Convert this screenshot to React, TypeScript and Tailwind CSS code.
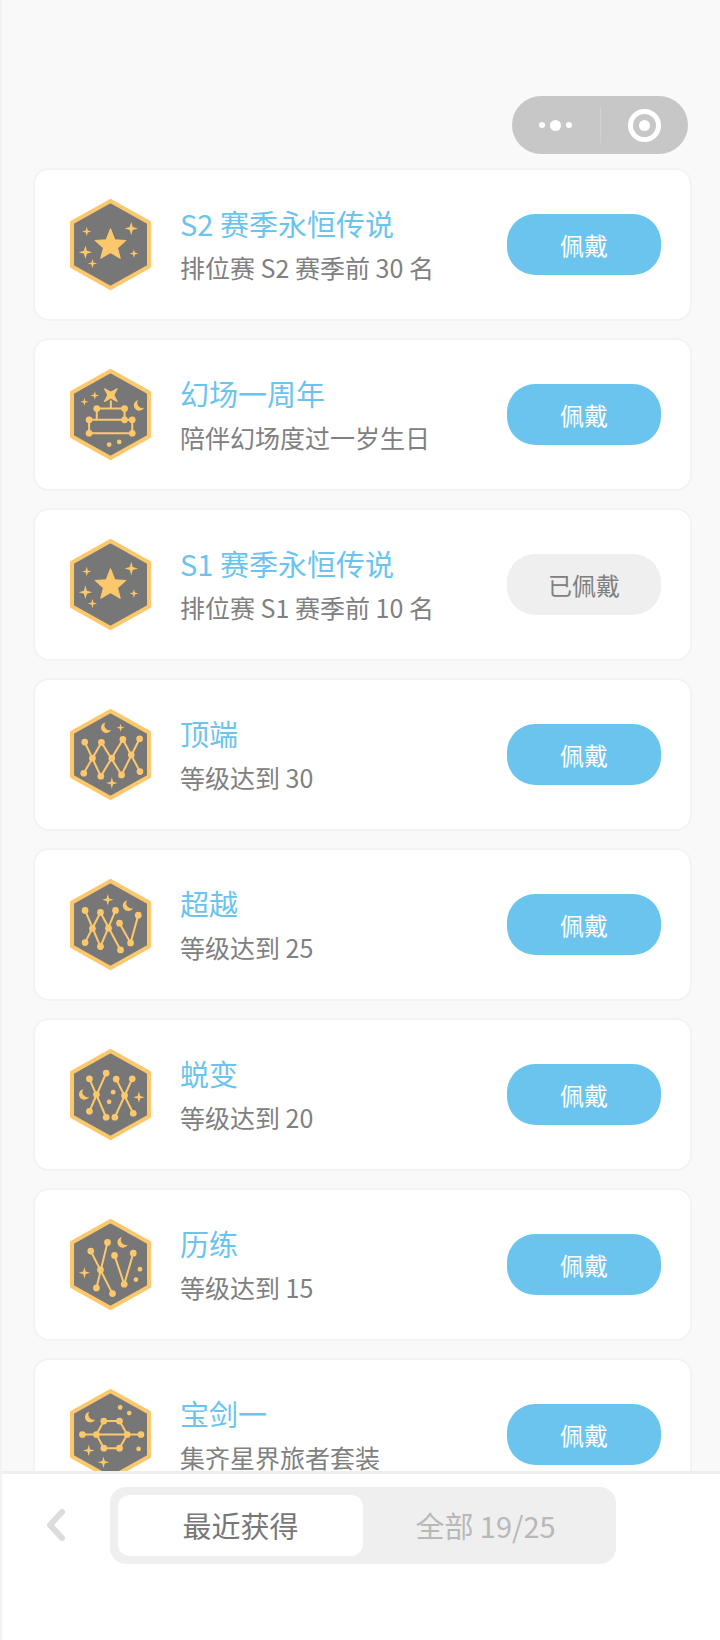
import React, { useState } from 'react';

type Point = [number, number];

interface BadgeArt {
  lines?: string;
  nodes?: Point[];
  dots?: Point[];
  // x, y, radius
  sparks?: [number, number, number][];
  moon?: Point;
  extra?: React.ReactNode;
}

interface Badge {
  id: number;
  title: string;
  description: string;
  art: BadgeArt;
}

const GOLD = '#fdc86c';

const starArt: BadgeArt = {
  sparks: [
    [50, 97, 14],
    [183, 88, 20],
    [46, 159, 20],
    [67, 193, 14],
    [191, 163, 13],
  ],
  extra: (
    <path
      d="M121 89 L134 122 L167 124 L142 146 L150 177 L121 160 L92 177 L100 146 L75 124 L108 122 Z"
      fill={GOLD}
      stroke={GOLD}
      strokeWidth="3"
      strokeLinejoin="round"
    />
  ),
};

const cakeArt: BadgeArt = {
  lines: 'M122 94 V118 M80 152 V118 H163 V152 M57 152 H186 V192 H57 Z',
  nodes: [[80, 118], [163, 118], [57, 152], [163, 152], [186, 152], [57, 192], [186, 192]],
  dots: [[117, 226], [147, 218]],
  sparks: [
    [43, 98, 12],
    [74, 79, 13],
  ],
  moon: [206, 109],
  extra: (
    <path
      d="M103 59 L122 69 L141 59 L131 78 L141 97 L122 87 L103 97 L113 78 Z"
      fill={GOLD}
      stroke={GOLD}
      strokeWidth="3"
      strokeLinejoin="round"
    />
  ),
};

const level30Art: BadgeArt = {
  lines: 'M44 99 L92 201 L158 91 L209 187 M41 192 L94 100 L154 197 L208 89',
  nodes: [
    [44, 99], [94, 100], [158, 91], [208, 89],
    [67, 147], [125, 147], [183, 137],
    [41, 192], [92, 201], [154, 197], [209, 187],
  ],
  sparks: [
    [151, 56, 12],
    [125, 221, 17],
  ],
  moon: [108, 56],
};

const level25Art: BadgeArt = {
  lines: 'M45 94 L91 202 L136 94 M45 190 L91 100 L151 212 M148 132 L181 191 L204 108',
  nodes: [
    [45, 94], [91, 100], [136, 94],
    [67, 148], [115, 147],
    [45, 190], [91, 202], [151, 212],
    [148, 132], [181, 191], [204, 108],
  ],
  sparks: [[113, 62, 17]],
  moon: [173, 80],
};

const level20Art: BadgeArt = {
  lines: 'M58 89 L108 204 M108 72 L58 186 M138 90 L189 192 M186 89 L134 204',
  nodes: [
    [58, 89], [108, 72], [79, 136], [58, 186], [108, 204],
    [138, 90], [186, 89], [163, 139], [134, 204], [189, 192],
  ],
  dots: [[129, 129], [117, 158]],
  sparks: [[206, 144, 17]],
  moon: [42, 136],
};

const level15Art: BadgeArt = {
  lines: 'M62 96 L127 223 M112 70 L79 206 M133 109 L162 195 L189 102',
  nodes: [
    [62, 96], [112, 70], [91, 152], [79, 206], [127, 223],
    [133, 109], [189, 102], [162, 195],
  ],
  dots: [[209, 150], [197, 181]],
  sparks: [[43, 161, 17]],
  moon: [157, 70],
};

const swordArt: BadgeArt = {
  lines: 'M37 136 H212 M79 136 L101 96 H148 L171 136 L148 177 H101 Z',
  nodes: [
    [37, 136], [79, 136], [171, 136], [212, 136],
    [101, 96], [148, 96], [101, 177], [148, 177],
  ],
  dots: [[150, 55], [177, 72], [205, 179]],
  sparks: [
    [56, 184, 17],
    [100, 219, 17],
  ],
  moon: [60, 84],
};

const badges: Badge[] = [
  { id: 1, title: 'S2 赛季永恒传说', description: '排位赛 S2 赛季前 30 名', art: starArt },
  { id: 2, title: '幻场一周年', description: '陪伴幻场度过一岁生日', art: cakeArt },
  { id: 3, title: 'S1 赛季永恒传说', description: '排位赛 S1 赛季前 10 名', art: starArt },
  { id: 4, title: '顶端', description: '等级达到 30', art: level30Art },
  { id: 5, title: '超越', description: '等级达到 25', art: level25Art },
  { id: 6, title: '蜕变', description: '等级达到 20', art: level20Art },
  { id: 7, title: '历练', description: '等级达到 15', art: level15Art },
  { id: 8, title: '宝剑一', description: '集齐星界旅者套装', art: swordArt },
];

const sparkPath = (x: number, y: number, r: number) => {
  const k = r * 0.22;
  return `M${x} ${y - r} L${x + k} ${y - k} L${x + r} ${y} L${x + k} ${y + k} L${x} ${y + r} L${x - k} ${y + k} L${x - r} ${y} L${x - k} ${y - k} Z`;
};

const BadgeIcon: React.FC<{ art: BadgeArt }> = ({ art }) => (
  <svg viewBox="0 0 242 272" className="w-[81px] h-[91px] shrink-0" aria-hidden="true">
    <path
      d="M121 6 L236 70 V202 L121 266 L6 202 V70 Z"
      fill="#777777"
      stroke={GOLD}
      strokeWidth="12"
      strokeLinejoin="round"
    />
    {art.lines && <path d={art.lines} fill="none" stroke={GOLD} strokeWidth="6" />}
    {art.nodes?.map(([x, y]) => <circle key={`${x}-${y}`} cx={x} cy={y} r="10" fill={GOLD} />)}
    {art.dots?.map(([x, y]) => <circle key={`${x}-${y}`} cx={x} cy={y} r="7" fill={GOLD} />)}
    {art.sparks?.map(([x, y, r]) => (
      <path key={`${x}-${y}`} d={sparkPath(x, y, r)} fill={GOLD} />
    ))}
    {art.moon && (
      <path
        d="M-2 -16 A16 16 0 1 0 15 7 A15 15 0 0 1 -2 -16 Z"
        transform={`translate(${art.moon[0]} ${art.moon[1]})`}
        fill={GOLD}
      />
    )}
    {art.extra}
  </svg>
);

interface BadgeCardProps {
  badge: Badge;
  worn: boolean;
  onWear: () => void;
}

const BadgeCard: React.FC<BadgeCardProps> = ({ badge, worn, onWear }) => (
  <li className="flex items-center gap-[29px] py-[29px] pl-[35px] pr-[29px] bg-white border-2 border-[#f3f3f3] rounded-2xl">
    <BadgeIcon art={badge.art} />
    <div className="flex-1 min-w-0 pb-2">
      <h2 className="mb-[7px] text-[29px] leading-[46px] text-[#6bc4ee]">{badge.title}</h2>
      <p className="text-[25px] leading-7 text-[#808080]">{badge.description}</p>
    </div>
    <button
      type="button"
      onClick={onWear}
      className={
        worn
          ? 'w-[154px] h-[61px] shrink-0 rounded-[28px] text-2xl bg-[#efefef] text-[#808080]'
          : 'w-[154px] h-[61px] shrink-0 rounded-[28px] text-2xl bg-[#6bc4ee] text-white'
      }
    >
      {worn ? '已佩戴' : '佩戴'}
    </button>
  </li>
);

const Capsule = () => (
  <div className="flex items-center w-44 h-[58px] rounded-full bg-[#c7c7c7]">
    <button type="button" aria-label="更多" className="flex flex-1 items-center justify-center gap-[5px]">
      <span className="size-[6px] rounded-full bg-white" />
      <span className="size-[11px] rounded-full bg-white" />
      <span className="size-[6px] rounded-full bg-white" />
    </button>
    <span className="w-px h-9 bg-[#d2d2d2]" />
    <button type="button" aria-label="关闭" className="flex flex-1 items-center justify-center">
      <span className="flex items-center justify-center size-[33px] rounded-full border-5 border-white">
        <span className="size-[11px] rounded-full bg-white" />
      </span>
    </button>
  </div>
);

export default function App() {
  const [wornId, setWornId] = useState(3);
  const [tab, setTab] = useState<'recent' | 'all'>('recent');

  const tabs = [
    { key: 'recent' as const, label: '最近获得' },
    { key: 'all' as const, label: '全部 19/25' },
  ];

  return (
    <div className="flex flex-col h-screen bg-[#f9f9f9] border-l-2 border-[#f2f2f2] font-['Noto_Sans_CJK_SC',sans-serif]">
      <header className="flex justify-end pt-24 pr-8 pb-[14px]">
        <Capsule />
      </header>

      <main className="flex-1 min-h-0 overflow-y-auto [scrollbar-width:none] pl-[31px] pr-7">
        <ul className="flex flex-col gap-[17px]">
          {badges.map((badge) => (
            <BadgeCard
              key={badge.id}
              badge={badge}
              worn={badge.id === wornId}
              onWear={() => setWornId(badge.id)}
            />
          ))}
        </ul>
      </main>

      {/* Bottom bar */}
      <footer className="flex items-center gap-11 pt-[13px] pb-[76px] pl-11 pr-26 bg-white border-t-3 border-[#eeeeee]">
        <button type="button" aria-label="返回" className="shrink-0">
          <svg viewBox="0 0 20 34" className="w-5 h-[34px]" fill="none" aria-hidden="true">
            <path d="M16 3 L4 16 L16 29" stroke="#dcdcdc" strokeWidth="6" strokeLinecap="round" strokeLinejoin="round" />
          </svg>
        </button>
        <div className="flex flex-1 p-2 rounded-2xl bg-[#efefef]">
          {tabs.map((item) => (
            <button
              key={item.key}
              type="button"
              onClick={() => setTab(item.key)}
              className={
                tab === item.key
                  ? 'flex-1 h-[61px] rounded-xl text-[29px] bg-white text-[#777777]'
                  : 'flex-1 h-[61px] rounded-xl text-[29px] text-[#b8b8b8]'
              }
            >
              {item.label}
            </button>
          ))}
        </div>
      </footer>
    </div>
  );
}
